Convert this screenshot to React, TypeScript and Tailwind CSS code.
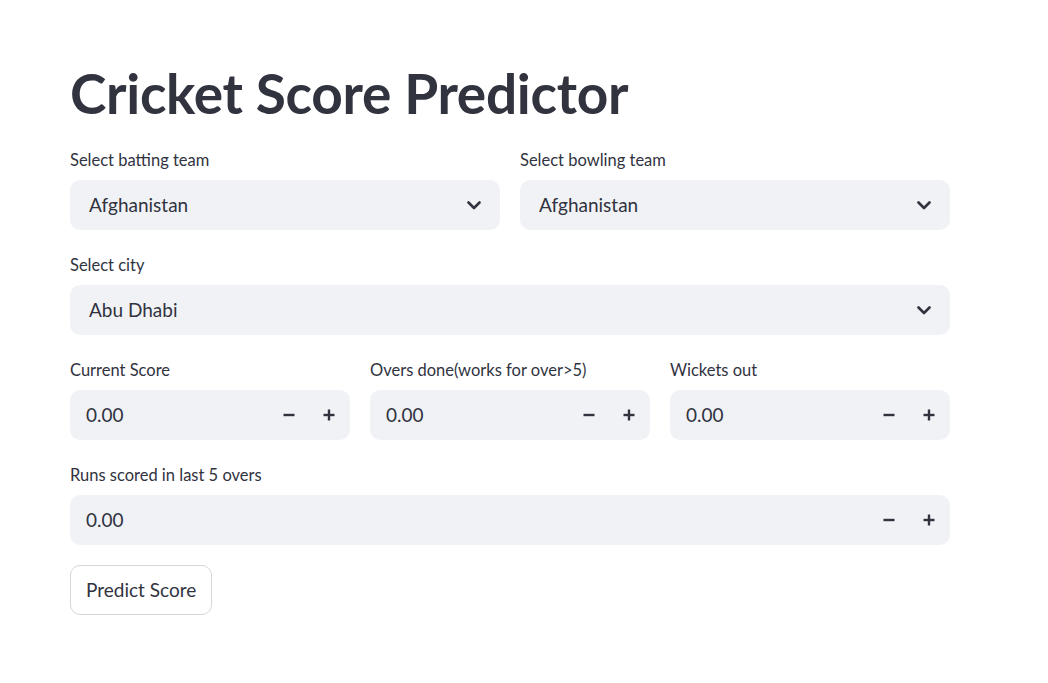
import React from "react";

const font = { fontFamily: '"Lato", "Noto Sans", sans-serif' };

function Chevron() {
  return (
    <svg width="14" height="9" viewBox="0 0 14 9" fill="none">
      <path d="M1.5 1.5L7 7L12.5 1.5" stroke="#31333F" strokeWidth="2.6" strokeLinecap="round" strokeLinejoin="round" />
    </svg>
  );
}

function Minus() {
  return (
    <svg width="12" height="12" viewBox="0 0 12 12">
      <rect x="0.5" y="4.8" width="11" height="2.4" fill="#31333F" />
    </svg>
  );
}

function Plus() {
  return (
    <svg width="12" height="12" viewBox="0 0 12 12">
      <rect x="0.5" y="4.8" width="11" height="2.4" fill="#31333F" />
      <rect x="4.8" y="0.5" width="2.4" height="11" fill="#31333F" />
    </svg>
  );
}

function Label({ text }: { text: string }) {
  return <div className="text-[16.5px] leading-[20px] text-[#31333F] mb-[10px]">{text}</div>;
}

function SelectBox({ label, value }: { label: string; value: string }) {
  return (
    <div className="flex flex-col">
      <Label text={label} />
      <div className="h-[50px] rounded-[10px] bg-[#F0F2F6] flex items-center justify-between pl-[19px] pr-[19px]">
        <span className="text-[19px] text-[#31333F]">{value}</span>
        <Chevron />
      </div>
    </div>
  );
}

function NumberBox({ label, value }: { label: string; value: string }) {
  return (
    <div className="flex flex-col">
      <Label text={label} />
      <div className="h-[50px] rounded-[10px] bg-[#F0F2F6] flex items-center">
        <span className="flex-1 pl-[16px] text-[19px] text-[#31333F]">{value}</span>
        <div className="w-[40px] h-full flex items-center justify-center"><Minus /></div>
        <div className="w-[40px] h-full flex items-center justify-center mr-[1px]"><Plus /></div>
      </div>
    </div>
  );
}

export default function App() {
  return (
    <div className="min-h-screen bg-white" style={font}>
      <div className="w-[880px] ml-[70px] pt-[62px] flex flex-col">
        <h1 className="text-[55px] leading-[62px] font-bold text-[#31333F] tracking-[-0.3px] mb-[26px]">
          Cricket Score Predictor
        </h1>

        <div className="grid grid-cols-2 gap-[20px]">
          <SelectBox label="Select batting team" value="Afghanistan" />
          <SelectBox label="Select bowling team" value="Afghanistan" />
        </div>

        <div className="mt-[25px]">
          <SelectBox label="Select city" value="Abu Dhabi" />
        </div>

        <div className="grid grid-cols-3 gap-[20px] mt-[25px]">
          <NumberBox label="Current Score" value="0.00" />
          <NumberBox label="Overs done(works for over>5)" value="0.00" />
          <NumberBox label="Wickets out" value="0.00" />
        </div>

        <div className="mt-[25px]">
          <NumberBox label="Runs scored in last 5 overs" value="0.00" />
        </div>

        <div className="mt-[20px]">
          <button className="h-[50px] px-[15px] rounded-[10px] border border-[#d5d6d9] bg-white text-[19px] text-[#31333F]">
            Predict Score
          </button>
        </div>
      </div>
    </div>
  );
}
